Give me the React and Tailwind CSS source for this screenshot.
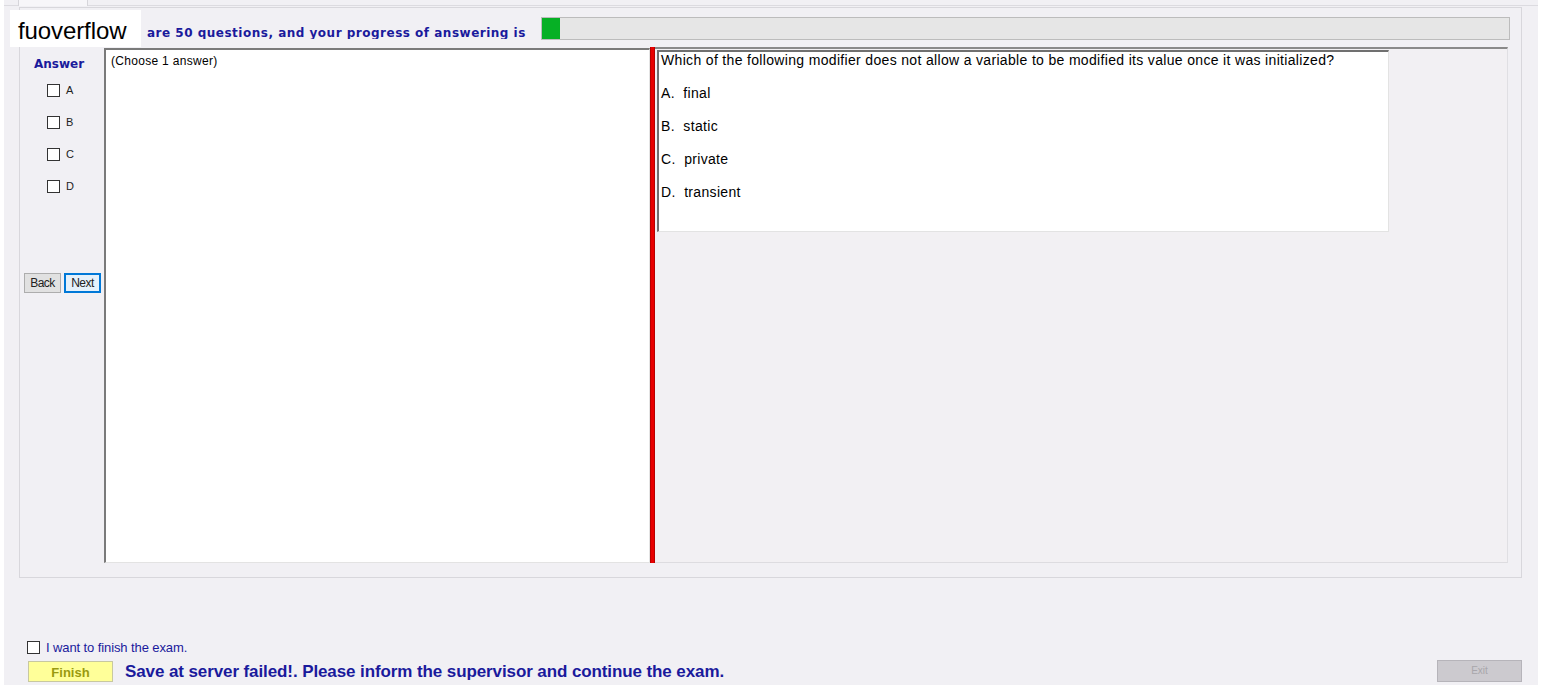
import { useState } from 'react'

const OPTIONS = ['A', 'B', 'C', 'D']
const ANSWERS = [
  { key: 'A', text: 'final' },
  { key: 'B', text: 'static' },
  { key: 'C', text: 'private' },
  { key: 'D', text: 'transient' },
]

function Box({ checked, onClick }) {
  return (
    <span
      onClick={onClick}
      className={`inline-block w-[13px] h-[13px] border border-[#333] bg-white ${checked ? 'bg-[#333]' : ''}`}
    />
  )
}

export default function App() {
  const [picked, setPicked] = useState({})
  const [finish, setFinish] = useState(false)

  return (
    <div className="relative w-full h-[690px] bg-white overflow-hidden font-['Liberation_Sans',Arial,sans-serif] text-black">
      <div className="ml-[4px] w-[1534px] h-[685px] bg-[#f1f0f4] flex flex-col">
        {/* tab strip */}
        <div className="h-[6px] flex border-b border-[#dcdbe0]">
          <div className="ml-[14px] w-[70px] h-[6px] bg-[#f7f6f9] border-x border-[#d6d5da]" />
        </div>

        {/* group box */}
        <div className="ml-[15px] mt-[1px] w-[1503px] h-[571px] border border-[#d8d7dc] flex flex-col">
          {/* progress header (start of the sentence sits under the watermark) */}
          <div className="mt-[9px] h-[23px] flex items-center">
            <div className="w-[521px] pl-[127px] text-[12px] font-bold tracking-[0.5px] font-['DejaVu_Sans',Verdana,sans-serif] text-[#1a1a9c] leading-none pt-[8px] whitespace-nowrap overflow-hidden">
              are 50 questions, and your progress of answering is
            </div>
            <div className="w-[969px] h-[23px] border border-[#bcbcbc] bg-[#e6e6e6] flex">
              <div className="w-[18px] h-full bg-[#06b025]" />
            </div>
          </div>

          {/* content */}
          <div className="mt-[7px] h-[516px] flex">
            {/* answer column */}
            <div className="w-[84px] flex flex-col">
              <div className="pt-[8px] pl-[14px] text-[12px] font-bold font-['DejaVu_Sans',Verdana,sans-serif] text-[#1a1a9c]">Answer</div>
              <div className="mt-[11px] flex flex-col gap-[19px] pl-[27px]">
                {OPTIONS.map(o => (
                  <label key={o} className="flex items-center gap-[6px] h-[13px] text-[11px] text-[#222]">
                    <Box checked={picked[o]} onClick={() => setPicked(p => ({ ...p, [o]: !p[o] }))} />
                    {o}
                  </label>
                ))}
              </div>
              <div className="mt-[80px] pl-[4px] flex items-start gap-[3px]">
                <button className="w-[37px] h-[20px] border border-[#adadad] bg-[#e1e1e1] text-[12px] tracking-[-0.5px] leading-none text-[#222]">Back</button>
                <button className="w-[37px] h-[20px] border-2 border-[#0078d7] bg-[#e5f1fb] text-[12px] tracking-[-0.5px] leading-none text-[#222]">Next</button>
              </div>
            </div>

            {/* hint box */}
            <div className="w-[546px] h-[515px] mt-[1px] bg-white border-l-2 border-t-2 border-[#7a7a7a] border-r border-b border-r-[#e3e3e3] border-b-[#e3e3e3] px-[5px] pt-[2px] text-[12px] tracking-[0.3px]">
              (Choose 1 answer)
            </div>

            {/* splitter */}
            <div className="w-[5px] h-[516px] bg-[#e80000] border-x border-[#b80000]" />

            {/* question panel */}
            <div className="w-[853px] h-[516px] bg-[#f2f0f3] border-t-2 border-[#8a8a8a] border-r border-r-[#e0dfe3] border-b border-b-[#dddce0] pl-[2px] pt-[1px]">
              <div className="w-[732px] h-[182px] bg-white border-l-2 border-t-2 border-[#707070] border-r border-b border-r-[#e3e3e3] border-b-[#e3e3e3] pl-[2px] text-[14px] tracking-[0.33px] leading-[16px]">
                <div className="h-[16px] whitespace-nowrap">Which of the following modifier does not allow a variable to be modified its value once it was initialized?</div>
                <div className="mt-[17px] flex flex-col gap-[17px]">
                  {ANSWERS.map(a => (
                    <div key={a.key} className="h-[16px] whitespace-pre">{a.key}.  {a.text}</div>
                  ))}
                </div>
              </div>
            </div>
          </div>
        </div>

        {/* bottom area */}
        <div className="flex-1 flex flex-col pl-[23px] pt-[63px]">
          <label className="flex items-center gap-[6px] h-[13px] text-[13px] tracking-[-0.1px] text-[#1a1a9c]">
            <Box checked={finish} onClick={() => setFinish(f => !f)} />
            I want to finish the exam.
          </label>
          <div className="mt-[6px] flex items-center">
            <button className="ml-[1px] w-[85px] h-[21px] bg-[#ffff99] border border-[#c8c8a0] text-[13px] font-bold text-[#9a9a10] leading-none pt-[3px]">
              Finish
            </button>
            <span className="ml-[12px] text-[17px] font-bold tracking-[-0.1px] text-[#1a1a9c] leading-none">
              Save at server failed!. Please inform the supervisor and continue the exam.
            </span>
            <button disabled className="ml-auto mr-[16px] w-[85px] h-[22px] bg-[#cccacf] border border-[#b6b4ba] text-[10px] text-[#a8a6ab] leading-none">
              Exit
            </button>
          </div>
        </div>
      </div>

      {/* watermark overlay */}
      <div className="absolute left-[10px] top-[10px] w-[131px] h-[37px] bg-white pl-[8px] pt-[9px] text-[24px] leading-none font-['Liberation_Sans',Arial,sans-serif] tracking-[-0.1px]">
        fuoverflow
      </div>
    </div>
  )
}
